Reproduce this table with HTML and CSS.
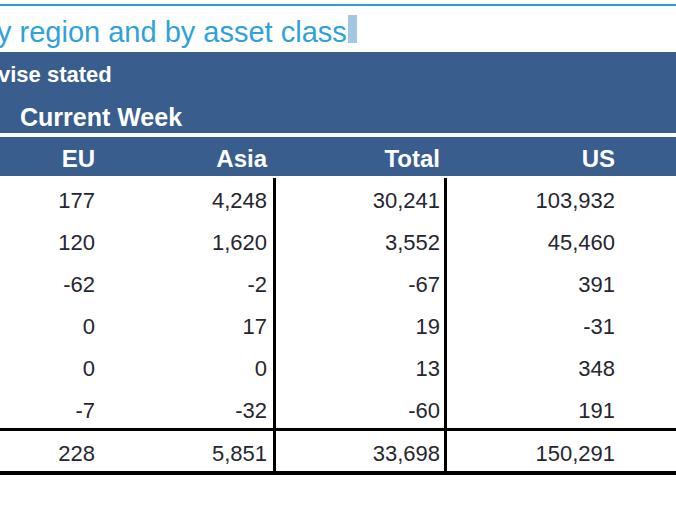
FILE: index.html
```html
<!DOCTYPE html>
<html>
<head>
<meta charset="utf-8">
<link rel="stylesheet" href="styles.css">
</head>
<body>
<div class="page">
  <div class="topline"></div>
  <div class="title">
    <span class="title-text">y region and by asset class</span>
    <span class="caret"></span>
  </div>
  <div class="band">
    <div class="band-note">vise stated</div>
    <div class="band-period">Current Week</div>
  </div>
  <div class="heads grid">
    <div class="cell c1">EU</div>
    <div class="cell c2">Asia</div>
    <div class="cell c3">Total</div>
    <div class="cell c4">US</div>
  </div>
  <div class="body">
    <div class="row grid">
      <div class="cell c1">177</div><div class="cell c2">4,248</div><div class="cell c3">30,241</div><div class="cell c4">103,932</div>
    </div>
    <div class="row grid">
      <div class="cell c1">120</div><div class="cell c2">1,620</div><div class="cell c3">3,552</div><div class="cell c4">45,460</div>
    </div>
    <div class="row grid">
      <div class="cell c1">-62</div><div class="cell c2">-2</div><div class="cell c3">-67</div><div class="cell c4">391</div>
    </div>
    <div class="row grid">
      <div class="cell c1">0</div><div class="cell c2">17</div><div class="cell c3">19</div><div class="cell c4">-31</div>
    </div>
    <div class="row grid">
      <div class="cell c1">0</div><div class="cell c2">0</div><div class="cell c3">13</div><div class="cell c4">348</div>
    </div>
    <div class="row grid">
      <div class="cell c1">-7</div><div class="cell c2">-32</div><div class="cell c3">-60</div><div class="cell c4">191</div>
    </div>
    <div class="row total grid">
      <div class="cell c1">228</div><div class="cell c2">5,851</div><div class="cell c3">33,698</div><div class="cell c4">150,291</div>
    </div>
  </div>
</div>
</body>
</html>
```
FILE: styles.css
```css
* { box-sizing: border-box; }
html, body { margin: 0; padding: 0; background: #fff; }
body { font-family: "Liberation Sans", Arial, Helvetica, sans-serif; overflow: hidden; }
.page { width: 676px; }

.topline { height: 2px; margin-top: 4px; background: #2b9fd8; }

.title { height: 46px; display: flex; align-items: flex-start; overflow: hidden; }
.title-text { font-size: 29px; line-height: 44px; padding-top: 4px; color: #2fa2dc; margin-left: -3px; white-space: nowrap; }
.caret { display: block; width: 9px; height: 28px; margin-top: 9px; margin-left: 1px; background: #a3c6e2; }

.band { height: 81px; background: #395e8e; color: #fff; font-weight: bold; padding-top: 8px; overflow: hidden; }
.band-note { font-size: 22px; line-height: 30px; margin-left: -2px; white-space: nowrap; }
.band-period { font-size: 25px; line-height: 30px; margin-top: 12px; padding-left: 20px; white-space: nowrap; }

.grid { display: grid; grid-template-columns: 150px 126px 171px 229px; }
.cell { text-align: right; white-space: nowrap; }
.c1 { padding-right: 55px; }
.c2 { padding-right: 6px; border-right: 3px solid transparent; }
.c3 { padding-right: 4px; border-right: 3px solid transparent; }
.c4 { padding-right: 61px; }

.heads { margin-top: 4px; height: 39px; background: #395e8e; color: #fff; font-weight: bold; font-size: 24px; line-height: 35px; padding-top: 4px; }

.body { margin-top: 2px; border-bottom: 4px solid #000; }
.row { height: 42px; font-size: 22px; line-height: 34px; color: #262630; }
.row .cell { padding-top: 6px; }
.row:not(:first-child) .cell { padding-top: 8px; }
.row .c2, .row .c3 { border-right-color: #000; }
.row:first-child { height: 40px; }
.row.total { height: 43px; border-top: 3px solid #000; }
.row.total .cell { padding-top: 5px; line-height: 36px; }
```
